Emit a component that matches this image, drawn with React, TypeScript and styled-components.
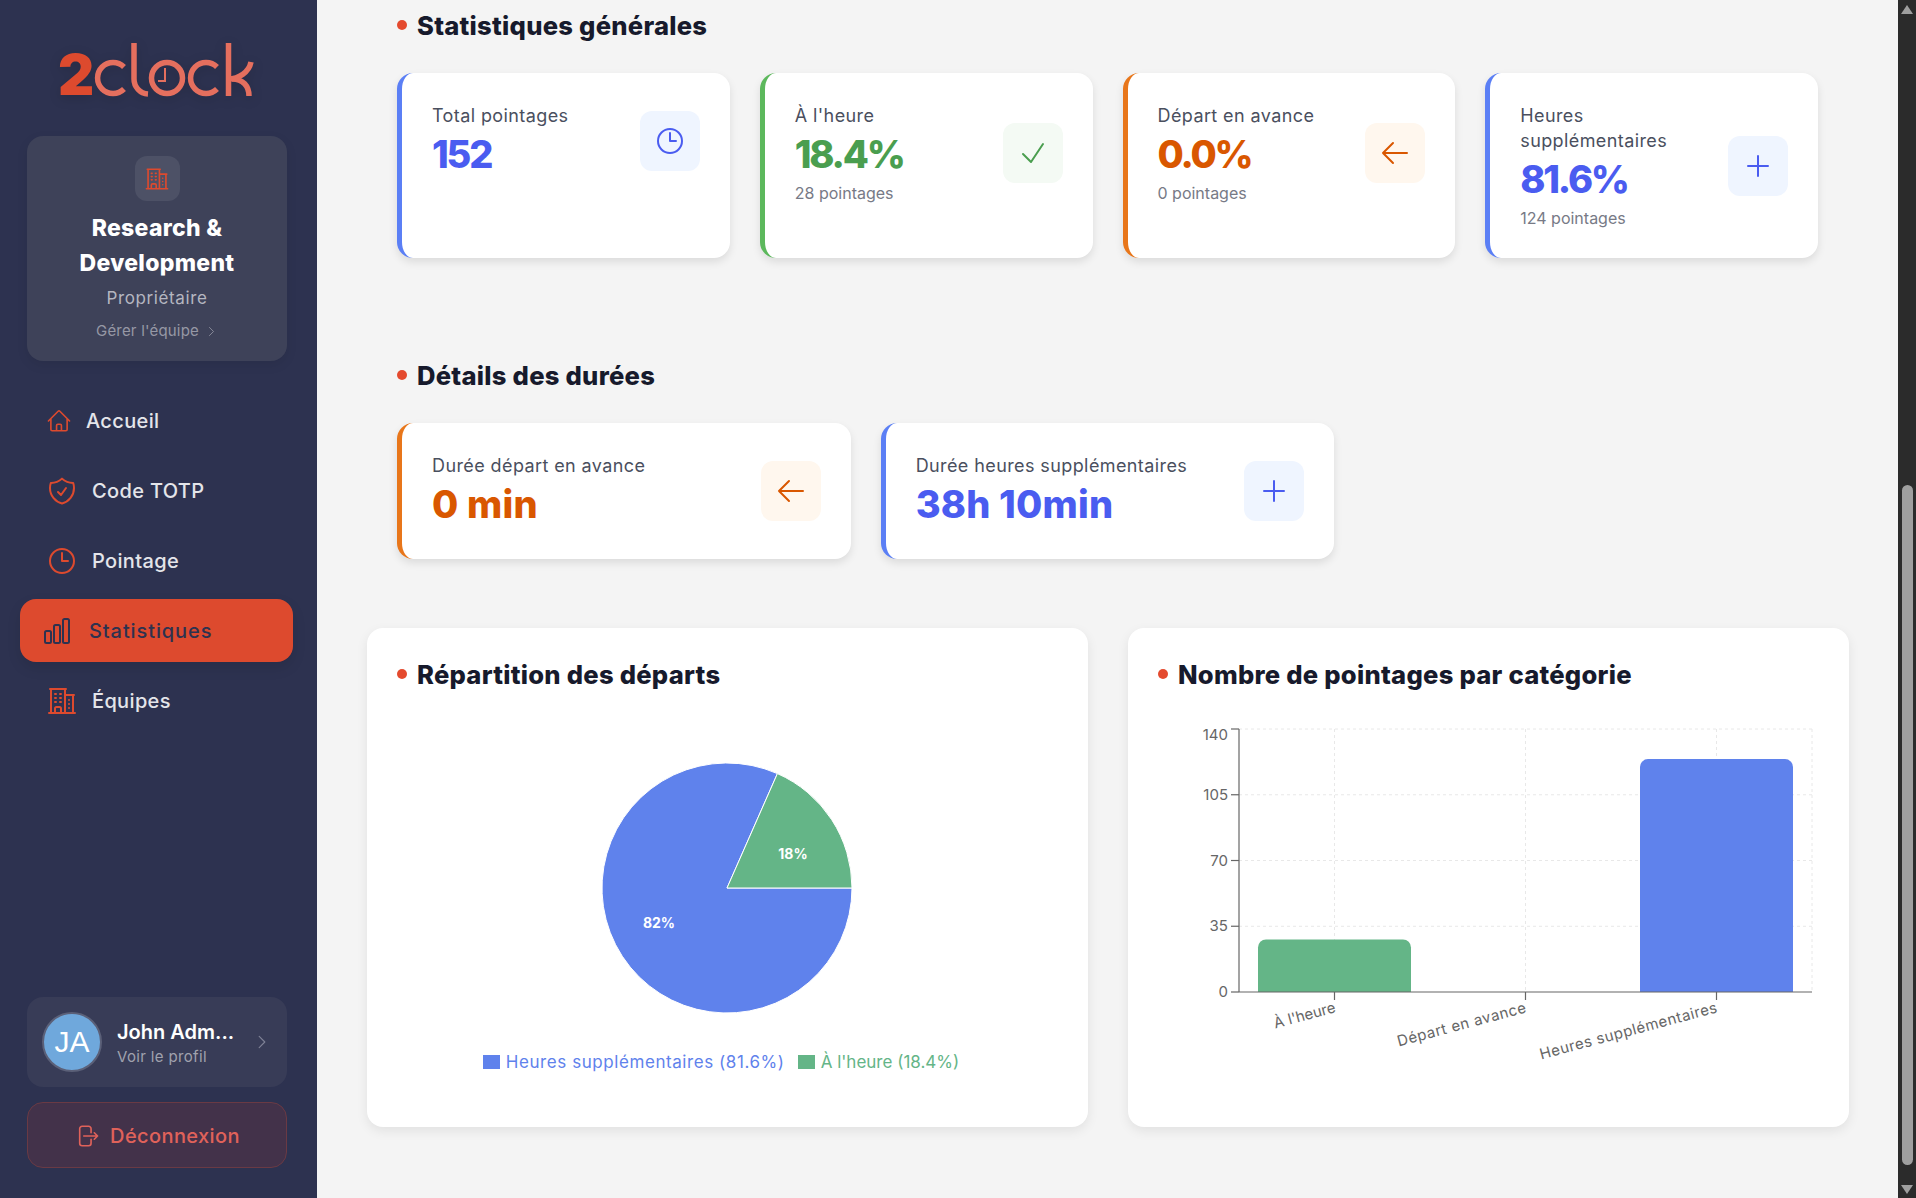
import React from 'react';
import styled, { createGlobalStyle } from 'styled-components';
import {
  HiOutlineArrowLeft,
  HiOutlineArrowRightOnRectangle,
  HiOutlineBuildingOffice2,
  HiOutlineChartBar,
  HiOutlineCheck,
  HiOutlineChevronRight,
  HiOutlineClock,
  HiOutlineHome,
  HiOutlinePlus,
  HiOutlineShieldCheck,
} from 'react-icons/hi2';

const GlobalStyle = createGlobalStyle`
  html, body {
    margin: 0;
    height: 100%;
    overflow: hidden;
    background: #f4f4f4;
    font-family: Inter, "Noto Sans", sans-serif;
  }
  * { box-sizing: border-box; }
`;

const tones = {
  blue: { border: '#5b7ff5', text: '#4a5cf0', soft: '#eff5ff' },
  green: { border: '#5cb85c', text: '#4a9e4f', soft: '#f4faf4' },
  orange: { border: '#e8761a', text: '#d95700', soft: '#fff7ee' },
};
type Tone = keyof typeof tones;

const Page = styled.div`
  display: flex;
  width: 1916px;
  height: 1198px;
  overflow: hidden;
`;

/* ---------- barre latérale ---------- */

const Sidebar = styled.aside`
  flex: 0 0 317px;
  display: flex;
  flex-direction: column;
  background: #2d3250;
  padding: 30px 0 30px;
`;

const LogoWrap = styled.div`
  height: 66px;
  padding-left: 56px;
  filter: drop-shadow(0 3px 6px rgba(0, 0, 0, 0.15));
`;

const TeamCard = styled.div`
  margin: 40px 30px 0 27px;
  height: 225px;
  padding-top: 20px;
  border-radius: 16px;
  background: #3e4259;
  box-shadow: 0 4px 12px rgba(0, 0, 0, 0.08);
  display: flex;
  flex-direction: column;
  align-items: center;
  text-align: center;
`;

const TeamIcon = styled.div`
  width: 45px;
  height: 45px;
  border-radius: 12px;
  background: #4d5166;
  color: #dd4a2e;
  display: flex;
  align-items: center;
  justify-content: center;
  margin-bottom: 10px;
`;

const TeamName = styled.div`
  color: #fff;
  font-size: 23px;
  font-weight: 800;
  letter-spacing: 0.3px;
  line-height: 35px;
  width: 220px;
`;

const TeamRole = styled.div`
  color: #b5b6c0;
  font-size: 17px;
  letter-spacing: 0.6px;
  line-height: 24px;
  margin-top: 5px;
`;

const TeamLink = styled.div`
  display: flex;
  align-items: center;
  gap: 6px;
  color: #9698a5;
  font-size: 15px;
  letter-spacing: 0.2px;
  line-height: 20px;
  margin-top: 11px;
`;

const Nav = styled.nav`
  margin: 28px 24px 0 20px;
  display: flex;
  flex-direction: column;
  gap: 7px;
`;

const NavItem = styled.div<{ $active?: boolean }>`
  height: 63px;
  display: flex;
  align-items: center;
  gap: ${(p) => (p.$active ? '16px' : '14px')};
  padding-left: ${(p) => (p.$active ? '21px' : '26px')};
  border-radius: 16px;
  font-size: 20px;
  font-weight: 500;
  letter-spacing: ${(p) => (p.$active ? '0.9px' : '0.35px')};
  color: ${(p) => (p.$active ? '#2d3250' : '#e4e5ea')};
  background: ${(p) => (p.$active ? '#dd4a2e' : 'transparent')};
  box-shadow: ${(p) => (p.$active ? '0 6px 14px rgba(0, 0, 0, 0.1)' : 'none')};

  svg {
    color: ${(p) => (p.$active ? '#2d3250' : '#dd4a2e')};
    flex: none;
  }
`;

const ProfileCard = styled.div`
  margin: auto 30px 0 27px;
  height: 90px;
  border-radius: 16px;
  background: #383c57;
  display: flex;
  align-items: center;
  padding-left: 15px;
`;

const Avatar = styled.div`
  width: 60px;
  height: 60px;
  border-radius: 50%;
  border: 2px solid #5b6078;
  background: #6fa8dc;
  color: #fff;
  font-family: 'Liberation Sans', sans-serif;
  font-size: 30px;
  display: flex;
  align-items: center;
  justify-content: center;
`;

const ProfileText = styled.div`
  margin: 2px 0 0 15px;
  width: 136px;
`;

const ProfileName = styled.div`
  color: #fff;
  font-size: 20px;
  font-weight: 600;
  line-height: 28px;
`;

const ProfileHint = styled.div`
  color: #a0a2ae;
  font-size: 15px;
  letter-spacing: 0.35px;
  line-height: 22px;
`;

const ProfileArrow = styled.div`
  color: #7f8296;
  display: flex;
`;

const LogoutButton = styled.div`
  margin: 15px 30px 0 27px;
  height: 66px;
  padding-top: 1px;
  border-radius: 16px;
  border: 1px solid #6a3a44;
  background: #43324a;
  color: #e0625a;
  font-size: 20px;
  font-weight: 500;
  letter-spacing: 0.4px;
  display: flex;
  align-items: center;
  justify-content: center;
  gap: 10px;
`;

/* ---------- contenu ---------- */

const Main = styled.main`
  flex: 1;
  min-width: 0;
  padding: 8px 49px 0 50px;
`;

const Section = styled.section<{ $gap: number }>`
  padding: 0 31px 0 30px;
  margin-bottom: ${(p) => p.$gap}px;
`;

const Heading = styled.h2`
  margin: 0;
  display: flex;
  align-items: center;
  gap: 10px;
  height: 34px;
  font-size: 25.6px;
  font-weight: 800;
  letter-spacing: 0.25px;
  color: #171a2c;

  &::before {
    content: '';
    width: 10px;
    height: 10px;
    border-radius: 50%;
    background: #e44a2e;
  }
`;

const CardGrid = styled.div<{ $cols: number }>`
  display: grid;
  grid-template-columns: repeat(${(p) => p.$cols}, 1fr);
  gap: 30px;
  margin-top: 31px;
`;

const StatCard = styled.div<{ $tone: Tone }>`
  display: flex;
  align-items: flex-start;
  padding: 30px;
  background: #fff;
  border-radius: 16px;
  border-left: 5px solid ${(p) => tones[p.$tone].border};
  box-shadow: 0 4px 8px rgba(0, 0, 0, 0.1);
`;

const StatRow = styled.div`
  flex: 1;
  display: flex;
  align-items: center;
  justify-content: space-between;
  gap: 12px;
`;

const StatLabel = styled.div`
  color: #4a4f5e;
  font-size: 18px;
  letter-spacing: 0.4px;
  line-height: 25px;
`;

const StatValue = styled.div<{ $tone: Tone; $wide?: boolean }>`
  color: ${(p) => tones[p.$tone].text};
  font-size: 38px;
  font-weight: 800;
  letter-spacing: ${(p) => (p.$wide ? '0.2px' : '-2.2px')};
  line-height: 51px;
  margin: 1px 0 -1px;
`;

const StatSub = styled.div`
  color: #777a86;
  font-size: 16px;
  line-height: 28px;
  margin-bottom: -4px;
`;

const StatIcon = styled.div<{ $tone: Tone }>`
  flex: none;
  width: 60px;
  height: 60px;
  border-radius: 12px;
  display: flex;
  align-items: center;
  justify-content: center;
  background: ${(p) => tones[p.$tone].soft};
  color: ${(p) => tones[p.$tone].text};
`;

const ChartGrid = styled.div`
  display: grid;
  grid-template-columns: repeat(2, 1fr);
  gap: 40px;
`;

const ChartCard = styled.div`
  height: 499px;
  padding: 29px 30px;
  background: #fff;
  border-radius: 16px;
  box-shadow: 0 4px 12px rgba(0, 0, 0, 0.08);
`;

const ChartFrame = styled.svg`
  display: block;
  margin: 34px -30px 0;
  font-family: Inter, sans-serif;
`;

const Legend = styled.div`
  display: flex;
  justify-content: center;
  align-items: center;
  gap: 13px;
  margin-left: -13px;
`;

const LegendItem = styled.div<{ $color: string; $wide?: boolean }>`
  display: flex;
  align-items: center;
  gap: 6px;
  color: ${(p) => p.$color};
  font-size: 17px;
  letter-spacing: ${(p) => (p.$wide ? '0.57px' : '0')};
  line-height: 24px;

  &::before {
    content: '';
    width: 17px;
    height: 14px;
    background: ${(p) => p.$color};
  }
`;

/* ---------- ascenseur ---------- */

const Scrollbar = styled.div`
  flex: 0 0 18px;
  position: relative;
  background: #2b2b2b;
`;

const ScrollThumb = styled.div`
  position: absolute;
  left: 4px;
  top: 485px;
  width: 11px;
  height: 680px;
  border-radius: 6px;
  background: #9f9f9f;
`;

const ScrollArrow = styled.div<{ $down?: boolean }>`
  position: absolute;
  left: 3px;
  ${(p) => (p.$down ? 'bottom: 4px;' : 'top: 5px;')}
  width: 0;
  height: 0;
  border-left: 6.5px solid transparent;
  border-right: 6.5px solid transparent;
  ${(p) => (p.$down ? 'border-top' : 'border-bottom')}: 9px solid #9f9f9f;
`;

/* ---------- dessins ---------- */

const Logo = () => (
  <svg width="204" height="82" viewBox="56 30 204 82" role="img" aria-label="2clock">
    <text x="58" y="95" fontFamily="Inter, sans-serif" fontSize="56" fontWeight="900" fill="#dd4a2e">
      2
    </text>
    <g fill="none" stroke="#e56f5e" strokeWidth="5.5">
      <path d="M124 67a15.5 15.5 0 1 0 0 22" />
      <path d="M134 43v36a15 15 0 0 0 14 15" />
      <circle cx="167" cy="78" r="15.5" />
      <path d="M217 67a15.5 15.5 0 1 0 0 22" />
      <path d="M228.5 43v53" />
      <path d="M228 79c11 0 21-7 23-17" />
      <path d="M232 79c11 0 17 7 17 17" />
    </g>
    <path d="M165 68v13h-7" fill="none" stroke="#e56f5e" strokeWidth="2" />
  </svg>
);

const PieChart = () => (
  <ChartFrame width="721" height="325" viewBox="367 725 721 325">
    <path d="M727 888L852 888A125 125 0 1 1 777.4 773.6Z" fill="#5f82ec" stroke="#fff" />
    <path d="M727 888L777.4 773.6A125 125 0 0 1 852 888Z" fill="#64b587" stroke="#fff" />
    <text x="793" y="859" textAnchor="middle" fill="#fff" fontSize="14" fontWeight="700">
      18%
    </text>
    <text x="659" y="928" textAnchor="middle" fill="#fff" fontSize="14" fontWeight="700">
      82%
    </text>
  </ChartFrame>
);

const BAR_LEFT = 1239;
const BAR_RIGHT = 1812;
const BAR_TOP = 729;
const BAR_BOTTOM = 992;
const yOf = (v: number) => BAR_BOTTOM - (v / 140) * (BAR_BOTTOM - BAR_TOP);

const bars = [
  { label: "À l'heure", value: 28, x: 1334.5, color: '#64b587', spacing: 0 },
  { label: 'Départ en avance', value: 0, x: 1525.5, color: '#64b587', spacing: 0.5 },
  { label: 'Heures supplémentaires', value: 124, x: 1716.5, color: '#5f82ec', spacing: 0.5 },
];

const BarChart = () => (
  <ChartFrame width="721" height="395" viewBox="1128 725 721 395">
    <g stroke="#e8e8e8" strokeDasharray="3 3">
      {[140, 105, 70, 35].map((v) => (
        <line key={v} x1={BAR_LEFT} x2={BAR_RIGHT} y1={yOf(v)} y2={yOf(v)} />
      ))}
      {[1334.5, 1525.5, 1716.5, 1812].map((x) => (
        <line key={x} x1={x} x2={x} y1={BAR_TOP} y2={BAR_BOTTOM} />
      ))}
    </g>
    {bars.filter((b) => b.value > 0).map((b) => (
      <path
        key={b.label}
        fill={b.color}
        d={`M${b.x - 76.5} ${BAR_BOTTOM}V${yOf(b.value) + 8}a8 8 0 0 1 8-8H${b.x + 68.5}a8 8 0 0 1 8 8V${BAR_BOTTOM}Z`}
      />
    ))}
    <g stroke="#666" strokeWidth="1.2">
      <line x1={BAR_LEFT} x2={BAR_LEFT} y1={BAR_TOP} y2={BAR_BOTTOM} />
      <line x1={BAR_LEFT} x2={BAR_RIGHT} y1={BAR_BOTTOM} y2={BAR_BOTTOM} />
      {[140, 105, 70, 35, 0].map((v) => (
        <line key={v} x1={BAR_LEFT - 8} x2={BAR_LEFT} y1={yOf(v)} y2={yOf(v)} />
      ))}
      {bars.map((b) => (
        <line key={b.label} x1={b.x} x2={b.x} y1={BAR_BOTTOM} y2={BAR_BOTTOM + 8} />
      ))}
    </g>
    {[140, 105, 70, 35, 0].map((v) => (
      <text
        key={v}
        x={BAR_LEFT - 11}
        y={yOf(v) + (v === 140 ? 11 : 5)}
        textAnchor="end"
        fill="#666"
        fontSize="15"
      >
        {v}
      </text>
    ))}
    {bars.map((b) => (
      <text
        key={b.label}
        x={b.x + 2}
        y={BAR_BOTTOM + 20}
        textAnchor="end"
        fill="#666"
        fontSize="15"
        letterSpacing={b.spacing}
        transform={`rotate(-15 ${b.x + 2} ${BAR_BOTTOM + 20})`}
      >
        {b.label}
      </text>
    ))}
  </ChartFrame>
);

type Stat = {
  label: string;
  value: string;
  sub?: string;
  tone: Tone;
  icon: React.ReactNode;
};

const general: Stat[] = [
  { label: 'Total pointages', value: '152', tone: 'blue', icon: <HiOutlineClock size={32} /> },
  { label: "À l'heure", value: '18.4%', sub: '28 pointages', tone: 'green', icon: <HiOutlineCheck size={32} /> },
  { label: 'Départ en avance', value: '0.0%', sub: '0 pointages', tone: 'orange', icon: <HiOutlineArrowLeft size={32} /> },
  { label: 'Heures supplémentaires', value: '81.6%', sub: '124 pointages', tone: 'blue', icon: <HiOutlinePlus size={32} /> },
];

const durations: Stat[] = [
  { label: 'Durée départ en avance', value: '0 min', tone: 'orange', icon: <HiOutlineArrowLeft size={32} /> },
  { label: 'Durée heures supplémentaires', value: '38h 10min', tone: 'blue', icon: <HiOutlinePlus size={32} /> },
];

const StatBlock: React.FC<{ stat: Stat; wide?: boolean }> = ({ stat, wide }) => (
  <StatCard $tone={stat.tone}>
    <StatRow>
      <div>
        <StatLabel>{stat.label}</StatLabel>
        <StatValue $tone={stat.tone} $wide={wide}>
          {stat.value}
        </StatValue>
        {stat.sub && <StatSub>{stat.sub}</StatSub>}
      </div>
      <StatIcon $tone={stat.tone}>{stat.icon}</StatIcon>
    </StatRow>
  </StatCard>
);

const App: React.FC = () => (
  <>
    <GlobalStyle />
    <Page>
      <Sidebar>
        <LogoWrap>
          <Logo />
        </LogoWrap>
        <TeamCard>
          <TeamIcon>
            <HiOutlineBuildingOffice2 size={26} />
          </TeamIcon>
          <TeamName>Research & Development</TeamName>
          <TeamRole>Propriétaire</TeamRole>
          <TeamLink>
            Gérer l'équipe <HiOutlineChevronRight size={13} />
          </TeamLink>
        </TeamCard>
        <Nav>
          <NavItem>
            <HiOutlineHome size={26} />
            Accueil
          </NavItem>
          <NavItem>
            <HiOutlineShieldCheck size={32} />
            Code TOTP
          </NavItem>
          <NavItem>
            <HiOutlineClock size={32} />
            Pointage
          </NavItem>
          <NavItem $active>
            <HiOutlineChartBar size={32} />
            Statistiques
          </NavItem>
          <NavItem>
            <HiOutlineBuildingOffice2 size={32} />
            Équipes
          </NavItem>
        </Nav>
        <ProfileCard>
          <Avatar>JA</Avatar>
          <ProfileText>
            <ProfileName>John Adm...</ProfileName>
            <ProfileHint>Voir le profil</ProfileHint>
          </ProfileText>
          <ProfileArrow>
            <HiOutlineChevronRight size={18} />
          </ProfileArrow>
        </ProfileCard>
        <LogoutButton>
          <HiOutlineArrowRightOnRectangle size={26} />
          Déconnexion
        </LogoutButton>
      </Sidebar>
      <Main>
        <Section $gap={100}>
          <Heading>Statistiques générales</Heading>
          <CardGrid $cols={4}>
            {general.map((s) => (
              <StatBlock key={s.label} stat={s} />
            ))}
          </CardGrid>
        </Section>
        <Section $gap={69}>
          <Heading>Détails des durées</Heading>
          <CardGrid $cols={3}>
            {durations.map((s) => (
              <StatBlock key={s.label} stat={s} wide />
            ))}
          </CardGrid>
        </Section>
        <ChartGrid>
          <ChartCard>
            <Heading>Répartition des départs</Heading>
            <PieChart />
            <Legend>
              <LegendItem $color="#5f82ec" $wide>
                Heures supplémentaires (81.6%)
              </LegendItem>
              <LegendItem $color="#64b587">À l'heure (18.4%)</LegendItem>
            </Legend>
          </ChartCard>
          <ChartCard>
            <Heading>Nombre de pointages par catégorie</Heading>
            <BarChart />
          </ChartCard>
        </ChartGrid>
      </Main>
      <Scrollbar>
        <ScrollArrow />
        <ScrollThumb />
        <ScrollArrow $down />
      </Scrollbar>
    </Page>
  </>
);

export default App;
